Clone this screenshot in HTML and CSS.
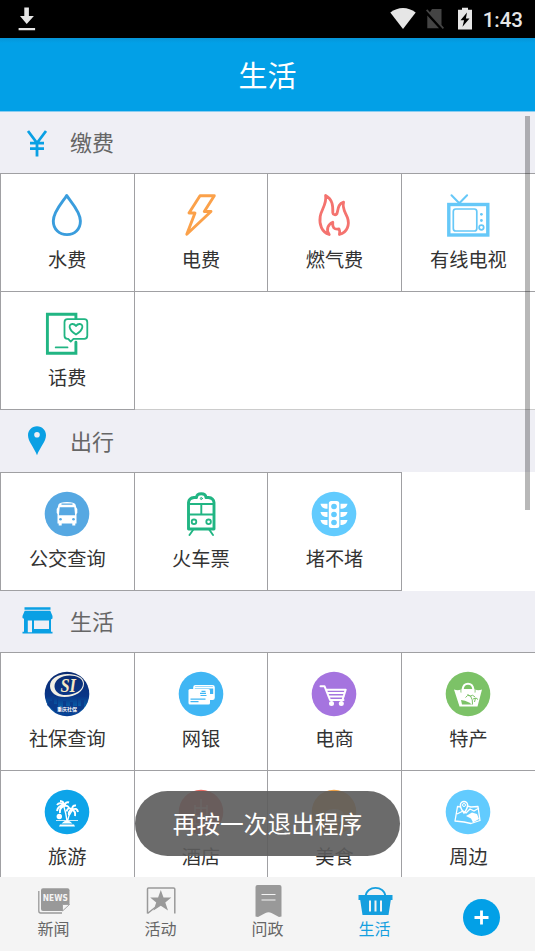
FILE: index.html
```html
<!DOCTYPE html>
<html lang="zh-CN">
<head>
<meta charset="utf-8">
<title>生活</title>
<link rel="stylesheet" href="styles.css">
</head>
<body>
<div class="app">
  <div class="status">
    <svg class="download" width="18" height="26" viewBox="0 0 18 26"><path d="M6.300 1.500h4.600v8.500h5L8.700 18 2 10h4.300zM.6 22.100h16.500v2.200H.6z"/></svg>
    <svg class="wifi" width="26" height="24" viewBox="0 0 26 24"><path d="M.3 5.500C8-.6 18-.6 25.700 5.500L13 22z"/></svg>
    <svg class="sim" width="20" height="24" viewBox="0 0 20 24"><path d="M7 2h9.500v17L4.500 6zM2.300 8.500 14 21.300H2.300zM1 3.500l1.300-1.300L19 20.800l-1.200 1.300z"/></svg>
    <svg class="battery" width="16" height="24" viewBox="0 0 16 24"><path fill-rule="evenodd" d="M5 .8h6v2h4V22.500H1V2.800h4zM10 5.500l-6.500 7.800h3.600L5.500 19.800l7-8.400H8.900z"/></svg>
    <span class="clock">1:43</span>
  </div>
  <header class="title">生活</header>
  <main class="content">
    <h2 class="section first"><svg width="36" height="36" viewBox="0 0 36 36"><path class="yen" d="M9 8 18 20 27 8M18 19.500v14M11 20.200h14M11 25.700h14"/></svg>缴费</h2>
    <div class="grid ruled">
      <div class="cell"><svg viewBox="0 0 48 48" class="line blue"><path stroke-width="2.900" d="M23.700 4.500C21 9.500 10.300 20 10.300 30c0 8.500 6.200 13.600 13.700 13.600S37.400 38.500 37.400 30C37.400 20 26.500 9.500 23.700 4.500Z"/></svg>水费</div>
      <div class="cell"><svg viewBox="0 0 48 48" class="line orange"><path stroke-width="2.900" d="M23 4.700h14.300L27.300 20.500h6.700L9.800 43.300l8.200-21.300h-6z"/></svg>电费</div>
      <div class="cell"><svg viewBox="0 0 48 48" class="line red"><path stroke-width="2.800" d="M15.600 4.500c1.500 8.500-4.400 14-5.400 21-1.200 8 1.500 15.500 9 18-3.500-5.300-1.200-10 3.600-12.200-.7 5 1.200 7.500 6.200 6.700 1.200 2 .8 4 .4 5.500 8-2 10.500-10 8-17-2-5.300-5.600-9-3.800-15.300-5.500 1.500-5.300 6.500-6.600 11.300-1 2-4 1.500-4.200-.7C23 15 22.800 8.500 15.600 4.500Z"/></svg>燃气费</div>
      <div class="cell"><svg viewBox="0 0 48 48" class="line sky"><path stroke-width="2" d="M7.500 4.200l7.800 8 7.800-8"/><rect x="4.800" y="13.500" width="39" height="30.500" stroke-width="3.400" stroke-linejoin="miter"/><rect x="9.300" y="18" width="23.500" height="22" rx="2.500" stroke-width="1.700"/><circle cx="37.400" cy="36.500" r="2.300" stroke-width="1.700"/><g class="dots"><circle cx="37.400" cy="23.300" r="1.400"/><circle cx="37.400" cy="29.500" r="1.400"/></g></svg>有线电视</div>
      <div class="cell"><svg viewBox="0 0 48 48" class="line green"><path stroke-width="2.900" stroke-linejoin="miter" d="M32.900 9.500V5.200H4.400v39h28.500v-11"/><path stroke-width="1.800" d="M12.700 38.400h11.800M24.500 10.200h16.800q3 0 3 3v13.600q0 3-3 3H30.500l-2.800 2.800-2.500-2.800h-.7q-3 0-3-3V13.200q0-3 3-3zM33 25.500c-8-5-7.500-10.300-3.800-10.500 2-.1 3 .8 3.800 2 .8-1.200 1.800-2.100 3.800-2 3.700.2 4.200 5.500-3.800 10.500z"/></svg>话费</div>
    </div>

    <h2 class="section"><svg width="36" height="36" viewBox="0 0 36 36"><path fill-rule="evenodd" d="M18 4.200c-5.200 0-9 4-9 9 0 6.300 6 12 9 20 3-8 9-13.700 9-20 0-5-3.800-9-9-9zm0 5.700a2.800 2.800 0 110 5.600 2.800 2.800 0 010-5.600z"/></svg>出行</h2>
    <div class="grid">
      <div class="cell"><svg viewBox="0 0 48 48"><circle cx="24" cy="24" r="22.300" fill="#56a8e2"/><path fill="#fff" d="M15.500 14.500q1-2.500 8.500-2.500t8.500 2.500l.8 3 1 1.500v4l-.8 1v9.500h-1.200v2h-3v-2H18.700v2h-3v-2h-1.200V24l-.8-1v-4l1-1.500z"/><path fill="#56a8e2" d="M18.500 13.600h11v1.200h-11zM16.700 17.200h14.600l.8 8h-16.200z"/><circle cx="17.500" cy="29.300" r="1.300" fill="#56a8e2"/><circle cx="30.500" cy="29.300" r="1.300" fill="#56a8e2"/></svg>公交查询</div>
      <div class="cell"><svg viewBox="0 0 48 48" class="line green"><path stroke-width="2.900" d="M11.500 39V12.500Q12 8 17 7.500h2.500c.5-5 9-5 9.500 0h2.500q5 .5 5.500 5V39z"/><path stroke-width="1.900" d="M12 14h25M12 24.500h25M24.300 14v10.500M16 40l-3.500 5M32.500 40l3.500 5"/><circle cx="24.300" cy="8.500" r="1" stroke-width="1"/><circle cx="17" cy="31.800" r="2.300" stroke-width="1.800"/><circle cx="31.600" cy="31.800" r="2.300" stroke-width="1.800"/></svg>火车票</div>
      <div class="cell"><svg viewBox="0 0 48 48"><circle cx="24" cy="24" r="22.300" fill="#62cbfe"/><rect x="18.800" y="11" width="10.500" height="27" rx="2.500" fill="#fff"/><g fill="#62cbfe"><circle cx="24" cy="16.500" r="2.800"/><circle cx="24" cy="24.500" r="2.800"/><circle cx="24" cy="32.500" r="2.800"/></g><path fill="#fff" d="M10.500 13.700h7v5c-4 0-6.500-2-7-5zm0 8.200h7v5c-4 0-6.500-2-7-5zm0 8.200h7v5c-4 0-6.500-2-7-5zm27-16.400h-7v5c4 0 6.500-2 7-5zm0 8.200h-7v5c4 0 6.500-2 7-5zm0 8.200h-7v5c4 0 6.500-2 7-5z"/></svg>堵不堵</div>
    </div>

    <h2 class="section"><svg width="36" height="36" viewBox="0 0 36 36"><path d="M5.500 5.200h26v2.500h-26zM5.700 8.700h25.600L33.500 14v2.500q-2.500 2-5 0-2.500 2-5 0-2.500 2-5 0-2.500 2-5 0-2.500 2-5 0-2.500 1.500-5-.500V14z"/><path fill-rule="evenodd" d="M5 16h27v13.700h1.500v1.700h-30v-1.700H5zM8.800 18.500v11.800h4.200V18.500zM15 18.500v8.500h15V18.500z"/></svg>生活</h2>
    <div class="grid">
      <div class="cell"><svg viewBox="0 0 48 48"><defs><linearGradient id="night" x1="0" y1="0" x2="0" y2="1"><stop offset="0" stop-color="#0b2b70"/><stop offset=".55" stop-color="#0a3688"/><stop offset=".8" stop-color="#0860a8"/><stop offset="1" stop-color="#063a91"/></linearGradient></defs><circle cx="24" cy="24" r="22.300" fill="url(#night)"/><path fill="#0a3c8c" d="M6 31h3v-5h2v8h3v-6h1v9h5v-6h3v5h4v-4h3v4h4v-9h1v9h3v-6h3v8L34 43H14L4 35z"/><path fill="#f3f0e5" fill-rule="evenodd" d="M25 4C14 4 7 9 7 16c0 6.500 6 11 14.500 11C32.500 27 41 21.500 41 13.500 41 7.500 34 4 25 4zm1.500 1.500c7.500 0 13.500 3 13.500 8.300 0 6.500-8 11.200-17 11.200-7 0-11.500-3.600-11.500-8.800C11.500 10 18.500 5.500 26.500 5.500z"/><text x="17.500" y="21.800" class="si" textLength="15.500" lengthAdjust="spacingAndGlyphs">SI</text><text x="14" y="41" class="si-name">重庆社保</text></svg>社保查询</div>
      <div class="cell"><svg viewBox="0 0 48 48"><circle cx="24" cy="24" r="22.300" fill="#40b6f4"/><rect x="17" y="15.800" width="20" height="13.500" rx="1.500" fill="none" stroke="#fff" stroke-width="1.600"/><path fill="#fff" d="M17 17h20v1.500H17zM32 24h5v5h-5z"/><rect x="11.500" y="19" width="21.500" height="15.500" rx="1.500" fill="#fff"/><path fill="none" stroke="#40b6f4" stroke-width="1.200" d="M13.500 29.200h15M13.500 31.700h8M23.500 25.500h6M23 23.300h6M24.500 21.300h4"/></svg>网银</div>
      <div class="cell"><svg viewBox="0 0 48 48"><circle cx="24" cy="24" r="22.300" fill="#a574df"/><path fill="none" stroke="#fff" stroke-width="2" stroke-linejoin="round" stroke-linecap="round" d="M10.500 16.200h4L20 30h13.500M16.500 19.800h19.200L32.800 29M17.500 23h17M18.500 26.400h15.300"/><circle cx="21.500" cy="33.400" r="2.500" fill="#fff"/><circle cx="31.300" cy="33.400" r="2.500" fill="#fff"/></svg>电商</div>
      <div class="cell"><svg viewBox="0 0 48 48"><circle cx="24" cy="24" r="22.300" fill="#7cc267"/><path fill="#fff" d="M10 19.500q4.500 1.500 9-.5h10q4.500 2 9 .5L33.500 36.500h-18z"/><path fill="none" stroke="#7cc267" stroke-width="1" d="M17 22.500V19.500M31 22.500V19.500"/><path fill="none" stroke="#fff" stroke-width="2" d="M18.700 22v-3c1-7 9.600-7 10.600 0v3"/><path fill="none" stroke="#7cc267" stroke-width="1" d="M28.500 34.500q.5-5-2-8.500m-5 1.500q2-3.500 5-1.500 2-2 4.500 1M26.500 26l-3-1.500M31.500 28l-1 4m-1.500-3 3-1 2 1.500"/><path fill="#7cc267" d="M17 30q4 0 8 2.500l3 2H18z"/></svg>特产</div>
      <div class="cell"><svg viewBox="0 0 48 48"><circle cx="24" cy="24" r="22.300" fill="#0da4e9"/><g fill="none" stroke="#fff"><path stroke-width="1.400" d="M24 33q-1-8-3-14M24.500 33q1-6 4.500-10.500"/><path stroke-width="2" d="M21 18q-4-5-7-1M21 18q-6-1-7 5M21 18q-5 2-4 7M21 18q0-5-4-5M21 18q2-5 5-3.500M21 18q5-1 5 3M29 22q-4-4-5.500 1.500M29 22q0-5 4-4.500M29 22q5-3 6 2M29 22q4 1 3 6M29 22q-4 1-3 5"/><path stroke-width=".8" d="M13 32.500h22"/></g><circle cx="16.300" cy="28.500" r="2.700" fill="#fff"/><path fill="#fff" d="M18.500 35.500q5.500-6 11 0zM17 36.500h14l1 2H16z"/></svg>旅游</div>
      <div class="cell"><svg viewBox="0 0 48 48"><circle cx="24" cy="24" r="22.300" fill="#e8675e"/><path fill="none" stroke="#fff" stroke-opacity=".6" stroke-width="1.300" d="M24 11v25M18 17v19M30 17v19M14 36h20M18 20h12M18 28h12"/></svg>酒店</div>
      <div class="cell"><svg viewBox="0 0 48 48"><circle cx="24" cy="24" r="22.300" fill="#eea045"/><path fill="#fff" fill-opacity=".6" d="M14 28q0-7 10-7t10 7zM13 30h22l-3 4H16z"/></svg>美食</div>
      <div class="cell"><svg viewBox="0 0 48 48"><circle cx="24" cy="24" r="22.300" fill="#62cbfe"/><path fill="none" stroke="#fff" stroke-width="1.300" stroke-linejoin="round" d="M17 19l-3.500-.5L11 33l9 1 7 1.500 9-3-2-14-7 .5-4-1M13 26l6-3 3 2 4-4 4 2 5-3"/><path fill="#fff" d="M22 28l6-3.500 5 1.500 2 5-6 3.500-2-4z"/><path fill="none" stroke="#fff" stroke-width="1.500" d="M20 25q-3.600-4.500-3.600-8a3.600 3.600 0 017.200 0q0 3.500-3.600 8z"/><circle cx="20" cy="17" r="1.500" fill="none" stroke="#fff"/></svg>周边</div>
    </div>
    <div class="scrollbar"></div>
  </main>

  <nav class="tabs">
    <a class="tab"><svg viewBox="0 0 36 34"><path fill="none" stroke="#999" stroke-width="1.300" d="M2.800 7v20q0 2 2 2H26"/><path fill="#999" d="M7 4.300h24.500q2 0 2 2V20.500L26.500 27H7q-2 0-2-2V6.300q0-2 2-2z"/><path fill="#f4f4f4" stroke="#999" stroke-width=".8" d="M26.500 27v-6.500h7z"/><text x="6.800" y="17" class="news" textLength="25" lengthAdjust="spacingAndGlyphs">NEWS</text></svg>新闻</a>
    <a class="tab"><svg viewBox="0 0 36 34"><path fill="none" stroke="#999" stroke-width="1.500" d="M4.500 29.500V5q0-1 1-1h25q1.300 0 1.300 1v24.500M4.500 29.500 12 23.500"/><path fill="#999" d="M17.800 6l2.700 7.500h7.800L22.300 18.500l2.700 8-7.200-4.700-7.300 4.700 2.700-8-6-5h7.900z"/></svg>活动</a>
    <a class="tab"><svg viewBox="0 0 36 34"><path fill="#999" d="M7.500 1h22q2 0 2 2v29.500l-2.500.5-7.500-4q-3-1.500-6 0l-7.500 4-2.500-.5V3q0-2 2-2z"/><path stroke="#f4f4f4" stroke-width="1.200" d="M11.500 10.500h14M11.500 16h14"/></svg>问政</a>
    <a class="tab active"><svg viewBox="0 0 36 34"><path fill="none" stroke="#159fdf" stroke-width="1.700" d="M8.500 12.500C9.500 1 27.500 1 28.500 12.500"/><path fill="#159fdf" d="M1.500 11h34v5h-1.700L31.500 31H5.500L3.200 16H1.500z"/><path stroke="#f4f4f4" stroke-width="2" d="M13 16.500v11M18.500 16.500v11M24 16.500v11"/></svg>生活</a>
    <a class="tab plus"><svg viewBox="0 0 38 38"><circle cx="18.500" cy="19.500" r="18.500" fill="#02a0e7"/><path stroke="#fff" stroke-width="2.800" d="M11.500 19.500h14M18.500 12.500v14"/></svg></a>
  </nav>
  <div class="toast">再按一次退出程序</div>
</div>
</body>
</html>
```
FILE: styles.css
```css
* { box-sizing: border-box; }

body {
  margin: 0;
  font-family: Roboto, "Noto Sans CJK SC", sans-serif;
  color: #333;
}

.app {
  position: relative;
  display: flex;
  flex-direction: column;
  width: 535px;
  height: 951px;
  overflow: hidden;
  background: #fff;
}

svg { display: block; flex: none; }

.status {
  display: flex;
  flex: none;
  align-items: center;
  height: 38px;
  padding: 0 12px 0 18px;
  background: #000;
  color: #e6e6e6;
}
.status svg { fill: #e6e6e6; }
.status .download { margin-right: auto; }
.status .wifi { margin-right: 9px; }
.status .sim { margin-right: 12px; fill: #444; }
.status .battery { margin-right: 10px; }
.clock { font-size: 20.5px; font-weight: 500; line-height: 38px; padding-top: 2px; }

.title {
  flex: none;
  height: 74px;
  padding-top: 2px;
  border-bottom: 1px solid #8bcdf0;
  background: linear-gradient(#0695d8, #02a0e7 5px);
  color: #fff;
  font-size: 29px;
  line-height: 75px;
  text-align: center;
}

.content {
  position: relative;
  flex: 1;
  min-height: 0;
  overflow: hidden;
}

.section {
  display: flex;
  align-items: center;
  gap: 15px;
  height: 61.4px;
  margin: 0;
  padding-bottom: 2.4px;
  padding-left: 19px;
  background: #efeff5;
  color: #666;
  font-size: 22px;
  font-weight: 400;
}
.section.first { padding-bottom: 3px; }
.section svg { fill: #0aa0e4; }
.section .yen { fill: none; stroke: #0aa0e4; stroke-width: 2.8; }

.grid {
  display: grid;
  grid-template-columns: repeat(3, 133.6px) 1fr;
  grid-auto-rows: 118px;
  padding-bottom: 1px;
}
.ruled {
  padding-bottom: 0;
  border-bottom: 1px solid #ccc;
}

.cell {
  display: flex;
  flex-direction: column;
  align-items: center;
  padding-top: 17px;
  border-top: 1px solid #a0a0a3;
  border-left: 1px solid #a0a0a3;
  box-shadow: 1px 0 #a0a0a3, 0 1px #a0a0a3, 1px 1px #a0a0a3;
  font-size: 19.2px;
  line-height: 28px;
}
.cell:nth-child(4n) { box-shadow: 0 1px #a0a0a3; }
.cell svg { width: 48px; height: 48px; margin-bottom: 8px; }

.line { fill: none; stroke-linecap: round; stroke-linejoin: round; }
.blue { stroke: #3a9ddd; }
.orange { stroke: #fba14a; }
.red { stroke: #f4736f; }
.sky { stroke: #66c8f8; }
.green { stroke: #21b583; }
.dots { fill: #66c8f8; stroke: none; }

.si {
  fill: #f7e9c4;
  font: italic 700 18px "Liberation Serif", serif;
}
.si-name {
  fill: #fff;
  font: 700 5px "Noto Sans CJK SC", sans-serif;
}
.news {
  fill: #f4f4f4;
  font: 700 9px "DejaVu Sans", sans-serif;
}

.scrollbar {
  position: absolute;
  top: 4px;
  right: 5px;
  width: 5px;
  height: 394px;
  background: rgba(0, 0, 0, .28);
}

.tabs {
  display: flex;
  flex: none;
  height: 74px;
  background: #f4f4f4;
}
.tab {
  display: flex;
  flex: 1;
  flex-direction: column;
  align-items: center;
  padding-top: 7px;
  color: #666;
  font-size: 16px;
  line-height: 24px;
}
.tab svg { width: 36px; height: 34px; }
.tab.active { color: #159fdf; }
.tab.plus { padding-top: 21px; }
.tab.plus svg { width: 38px; height: 38px; }

.toast {
  position: absolute;
  top: 791px;
  left: 135px;
  width: 265px;
  height: 65px;
  border-radius: 33px;
  background: rgba(92, 92, 92, .91);
  color: #fff;
  font-size: 23.7px;
  line-height: 68px;
  text-align: center;
}
```
